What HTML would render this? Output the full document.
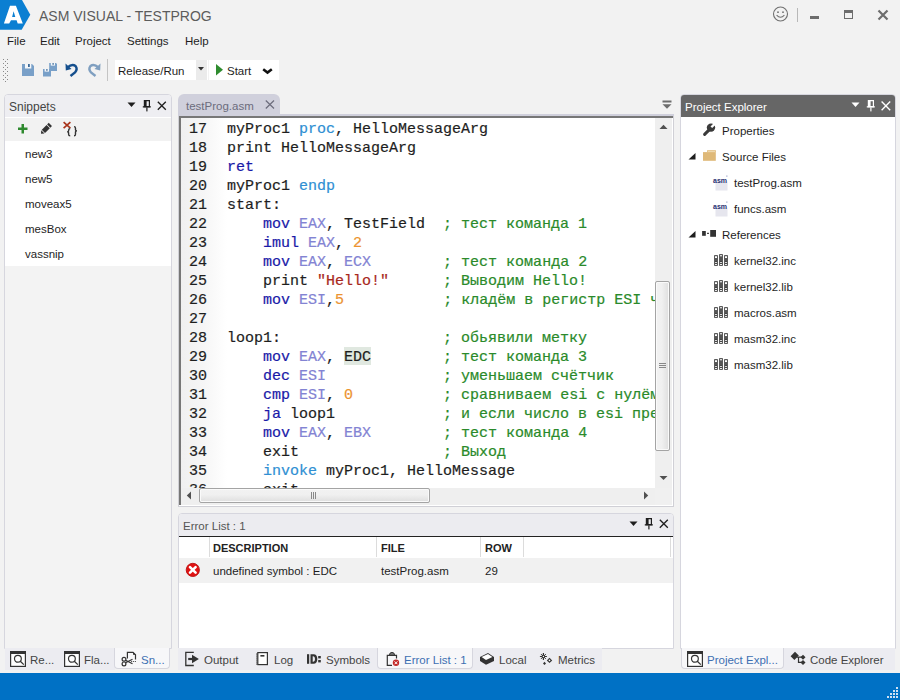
<!DOCTYPE html>
<html><head><meta charset="utf-8">
<style>
*{box-sizing:border-box;margin:0;padding:0}
html,body{width:900px;height:700px;overflow:hidden;background:#f2f2f2;font-family:"Liberation Sans",sans-serif;font-size:11.5px;line-height:14px;color:#1e1e1e;position:relative}
.a{position:absolute;white-space:nowrap}
svg.a{overflow:visible}
.code{font-family:"Liberation Mono",monospace;font-size:15px;line-height:19px;color:#1e1e1e;-webkit-text-stroke:0.2px currentColor}
.kw{color:#1a1aa8}
.kw2{color:#2f8fd3}
.reg{color:#8383d3}
.num{color:#ec9330}
.str{color:#a8281c}
.cm{color:#2a8a2a}
.ico{fill:#333}
</style></head><body>

<!-- ===== title bar ===== -->
<svg class="a" style="left:0;top:0" width="32" height="31" viewBox="0 0 32 31">
  <polygon points="0,0 22,0 30.3,14.8 21.7,29.8 0,29.8" fill="#0b7fd2"/>
  <path d="M3.9,23.5 L10,5.7 L15.9,5.7 L22.8,23.5 L17.7,23.5 L16.6,20.2 L11,20.2 L9.2,23.5 Z M12.1,17 L15.3,17 L13.6,11.2 Z" fill="#fff" fill-rule="evenodd"/>
</svg>
<div class="a" style="left:39px;top:8px;font-size:14px;line-height:16px;color:#5c5c5c">ASM VISUAL - TESTPROG</div>

<svg class="a" style="left:772px;top:6px" width="18" height="17" viewBox="0 0 18 17">
  <circle cx="8.5" cy="8" r="7" fill="none" stroke="#707070" stroke-width="1.1"/>
  <circle cx="6" cy="6.2" r="0.9" fill="#707070"/>
  <circle cx="11" cy="6.2" r="0.9" fill="#707070"/>
  <path d="M4.6,9.2 Q8.5,13.2 12.4,9.2" fill="none" stroke="#707070" stroke-width="1.1"/>
</svg>
<div class="a" style="left:797px;top:8px;width:1px;height:14px;background:#b8b8b8"></div>
<div class="a" style="left:810px;top:16px;width:9px;height:3px;background:#6d6d6d"></div>
<div class="a" style="left:844px;top:10px;width:9px;height:9px;border:1.2px solid #6d6d6d;border-top-width:3px"></div>
<svg class="a" style="left:877px;top:9px" width="12" height="12" viewBox="0 0 12 12">
  <path d="M1.5,1.5 L10.5,10.5 M10.5,1.5 L1.5,10.5" stroke="#6d6d6d" stroke-width="2.2"/>
</svg>

<!-- ===== menu ===== -->
<div class="a" style="left:7px;top:34px;font-size:11.5px">File</div>
<div class="a" style="left:40px;top:34px;font-size:11.5px">Edit</div>
<div class="a" style="left:75px;top:34px;font-size:11.5px">Project</div>
<div class="a" style="left:127px;top:34px;font-size:11.5px">Settings</div>
<div class="a" style="left:185px;top:34px;font-size:11.5px">Help</div>

<!-- ===== toolbar ===== -->
<svg class="a" style="left:0;top:0" width="10" height="85" viewBox="0 0 10 85"><g fill="#8a8a8a"><rect x="3" y="59" width="1" height="1"/><rect x="7" y="59" width="1" height="1"/><rect x="5" y="61" width="1" height="1"/><rect x="3" y="63" width="1" height="1"/><rect x="7" y="63" width="1" height="1"/><rect x="5" y="65" width="1" height="1"/><rect x="3" y="67" width="1" height="1"/><rect x="7" y="67" width="1" height="1"/><rect x="5" y="69" width="1" height="1"/><rect x="3" y="71" width="1" height="1"/><rect x="7" y="71" width="1" height="1"/><rect x="5" y="73" width="1" height="1"/><rect x="3" y="75" width="1" height="1"/><rect x="7" y="75" width="1" height="1"/><rect x="5" y="77" width="1" height="1"/><rect x="3" y="79" width="1" height="1"/><rect x="7" y="79" width="1" height="1"/><rect x="5" y="81" width="1" height="1"/></g></svg>
<!-- save -->
<svg class="a" style="left:22px;top:64px" width="13" height="13" viewBox="0 0 13 13">
  <path d="M0,0 H10 L12,2 V12 H0 Z" fill="#79a0c8"/>
  <rect x="3" y="0" width="6.3" height="4.5" fill="#f4f7fa"/>
  <rect x="6" y="0" width="1.8" height="3" fill="#3d6a98"/>
</svg>
<!-- save all -->
<svg class="a" style="left:42px;top:62px" width="16" height="15" viewBox="0 0 16 15">
  <path d="M7.2,1 H14 L15,2 V9 H7.2 Z" fill="#79a0c8"/>
  <rect x="8.8" y="1" width="4.2" height="2.6" fill="#f4f7fa"/><rect x="10.5" y="1" width="1.2" height="1.8" fill="#3d6a98"/>
  <path d="M1,7 H8 L9,8 V14.5 H1 Z" fill="#79a0c8"/>
  <rect x="2.6" y="7" width="4.4" height="2.6" fill="#f4f7fa"/><rect x="4.3" y="7" width="1.2" height="1.8" fill="#3d6a98"/>
</svg>
<!-- undo -->
<svg class="a" style="left:65px;top:62px" width="14" height="15" viewBox="0 0 14 15">
  <path d="M2.5,5.5 Q7,1.5 10.5,4 Q13,7 10,10.5 L5.5,14" fill="none" stroke="#154f8d" stroke-width="2.4"/>
  <path d="M0.5,1.5 L0.8,8.5 L6.5,7 Z" fill="#154f8d"/>
</svg>
<!-- redo -->
<svg class="a" style="left:87px;top:62px" width="14" height="15" viewBox="0 0 14 15">
  <path d="M11.5,5.5 Q7,1.5 3.5,4 Q1,7 4,10.5 L8.5,14" fill="none" stroke="#7f9fc0" stroke-width="2.4"/>
  <path d="M13.5,1.5 L13.2,8.5 L7.5,7 Z" fill="#7f9fc0"/>
</svg>
<div class="a" style="left:107px;top:59px;width:1px;height:22px;background:#c4c4c4"></div>

<div class="a" style="left:115px;top:60px;width:93px;height:20px;background:#fff"></div>
<div class="a" style="left:196px;top:60px;width:11px;height:20px;background:#ebebeb"></div>
<svg class="a" style="left:198px;top:67px" width="6" height="4" viewBox="0 0 6 4"><path d="M0,0 H6 L3,3.5 Z" fill="#333"/></svg>
<div class="a" style="left:118px;top:64px">Release/Run</div>
<div class="a" style="left:209px;top:60px;width:70px;height:20px;background:#fff"></div>
<svg class="a" style="left:216px;top:64px" width="8" height="12" viewBox="0 0 8 12"><path d="M0,0 L7,5.8 L0,11.6 Z" fill="#2f8c2f"/></svg>
<div class="a" style="left:227px;top:64px">Start</div>
<svg class="a" style="left:262px;top:68px" width="11" height="6" viewBox="0 0 11 6"><path d="M1.2,1.2 L5.5,4.6 L9.8,1.2" fill="none" stroke="#111" stroke-width="2.5"/></svg>

<!-- ===== snippets panel ===== -->
<div class="a" style="left:4px;top:94px;width:168px;height:555px;border:1px solid #d6d6de;border-radius:4px 4px 0 0;background:#fff;overflow:hidden">
  <div class="a" style="left:0;top:0;width:166px;height:22px;background:#eeeef2"></div>
  <div class="a" style="left:0;top:23px;width:166px;height:23px;background:#f2f2f2"></div>
  <div class="a" style="left:0;top:171px;width:166px;height:390px;background:#f3f3f3"></div>
</div>
<div class="a" style="left:9px;top:100px;color:#444;font-size:12px">Snippets</div>
<svg class="a" style="left:127px;top:101px" width="10" height="8" viewBox="0 0 10 8"><path d="M0.5,1.5 H8.5 L4.5,6 Z" fill="#1e1e1e"/></svg>
<svg class="a" style="left:142px;top:100px" width="10" height="12" viewBox="0 0 10 12"><path d="M2.4,0.6 H7.4 V6.6 H2.4 Z" fill="none" stroke="#1e1e1e" stroke-width="1.2"/><rect x="2" y="0.4" width="2.6" height="6.4" fill="#1e1e1e"/><rect x="0.8" y="6.2" width="8" height="1.3" fill="#1e1e1e"/><rect x="4.3" y="7.4" width="1.2" height="4" fill="#1e1e1e"/></svg>
<svg class="a" style="left:157px;top:101px" width="10" height="10" viewBox="0 0 10 10"><path d="M0.8,0.8 L8.8,8.8 M8.8,0.8 L0.8,8.8" stroke="#1e1e1e" stroke-width="1.3"/></svg>
<!-- toolbar icons -->
<svg class="a" style="left:18px;top:124px" width="10" height="10" viewBox="0 0 10 10"><path d="M3.5,0 H6 V3.5 H9.5 V6 H6 V9.5 H3.5 V6 H0 V3.5 H3.5 Z" fill="#2f8a2f"/></svg>
<svg class="a" style="left:36px;top:118px" width="22" height="22" viewBox="0 0 22 22"><g fill="#333"><polygon points="5.00,15.80 8.46,15.59 5.21,12.34"/><polygon points="9.03,15.02 13.84,10.21 10.59,6.96 5.78,11.77"/><polygon points="14.40,9.65 15.96,8.09 12.71,4.84 11.15,6.40"/></g></svg>
<svg class="a" style="left:62px;top:121px" width="17" height="16" viewBox="0 0 17 16">
  <path d="M1.6,1.2 L8.4,7.2 M8.4,1.2 L1.6,7.2" stroke="#a8341c" stroke-width="1.7"/>
  <path d="M8.2,7.6 Q6.6,7.6 6.6,9.2 V9.9 Q6.6,10.6 5.3,10.8 Q6.6,11 6.6,11.7 V13.2 Q6.6,14.8 8.2,14.8" fill="none" stroke="#333" stroke-width="1.4"/>
  <path d="M12,5.6 Q13.5,5.6 13.5,7.2 V9.1 Q13.5,9.7 14.9,9.9 Q13.5,10.1 13.5,10.7 V13.2 Q13.5,14.8 12,14.8" fill="none" stroke="#333" stroke-width="1.4"/>
</svg>
<div class="a" style="left:25px;top:147px">new3</div>
<div class="a" style="left:25px;top:172px">new5</div>
<div class="a" style="left:25px;top:197px">moveax5</div>
<div class="a" style="left:25px;top:222px">mesBox</div>
<div class="a" style="left:25px;top:247px">vassnip</div>

<!-- ===== editor ===== -->
<div class="a" style="left:178px;top:114px;width:496px;height:2px;background:#d0d0dc"></div>
<div class="a" style="left:178px;top:94px;width:102px;height:22px;background:#d0d0dc;border-radius:6px 6px 0 0"></div>
<div class="a" style="left:186px;top:99px;color:#6c6c7c;font-size:11.5px">testProg.asm</div>
<svg class="a" style="left:265px;top:100px" width="10" height="9" viewBox="0 0 10 9"><path d="M0.8,0.5 L9,8.5 M9,0.5 L0.8,8.5" stroke="#6c6c7c" stroke-width="1.2"/></svg>
<svg class="a" style="left:662px;top:100px" width="10" height="10" viewBox="0 0 10 10"><rect x="0.5" y="0.5" width="9" height="2" fill="#6d6d6d"/><path d="M0.5,4.2 H9.5 L5,8.8 Z" fill="#6d6d6d"/></svg>

<div class="a" style="left:178px;top:116px;width:496px;height:391px;border:1px solid #d0d0d6;background:#fff"></div>
<div class="a" style="left:179px;top:116px;width:494px;height:2px;background:#777"></div>
<div class="a" style="left:179px;top:116px;width:2px;height:389px;background:#777"></div>
<div class="a" style="left:181px;top:118px;width:46px;height:370px;background:linear-gradient(90deg,#f0f0f0,#f6f6f6 50%,#fff)"></div>

<div class="a code" style="left:181px;top:118px;width:474px;height:370px;overflow:hidden">
<div class="a" style="left:0;top:2px;width:474px;height:380px">
<div class="a" style="left:8px;top:0;color:#1e1e1e">17<br>18<br>19<br>20<br>21<br>22<br>23<br>24<br>25<br>26<br>27<br>28<br>29<br>30<br>31<br>32<br>33<br>34<br>35<br>36</div>
<div class="a" style="left:163px;top:227px;width:27px;height:18px;background:#e0e8e0"></div>
<pre class="a code" style="left:46px;top:0;white-space:pre">myProc1 <span class="kw2">proc</span>, HelloMessageArg
print HelloMessageArg
<span class="kw">ret</span>
myProc1 <span class="kw2">endp</span>
start:
    <span class="kw">mov</span> <span class="reg">EAX</span>, TestField  <span class="cm">; тест команда 1</span>
    <span class="kw">imul</span> <span class="reg">EAX</span>, <span class="num">2</span>
    <span class="kw">mov</span> <span class="reg">EAX</span>, <span class="reg">ECX</span>        <span class="cm">; тест команда 2</span>
    print <span class="str">"Hello!"</span>      <span class="cm">; Выводим Hello!</span>
    <span class="kw">mov</span> <span class="reg">ESI</span>,<span class="num">5</span>           <span class="cm">; кладём в регистр ESI число</span>

loop1:                  <span class="cm">; обьявили метку</span>
    <span class="kw">mov</span> <span class="reg">EAX</span>, EDC        <span class="cm">; тест команда 3</span>
    <span class="kw">dec</span> <span class="reg">ESI</span>             <span class="cm">; уменьшаем счётчик</span>
    <span class="kw">cmp</span> <span class="reg">ESI</span>, <span class="num">0</span>          <span class="cm">; сравниваем esi с нулём</span>
    <span class="kw">ja</span> loop1            <span class="cm">; и если число в esi превышает</span>
    <span class="kw">mov</span> <span class="reg">EAX</span>, <span class="reg">EBX</span>        <span class="cm">; тест команда 4</span>
    exit                <span class="cm">; Выход</span>
    <span class="kw2">invoke</span> myProc1, HelloMessage
    exit
</pre>
</div>
</div>

<!-- vertical scrollbar -->
<div class="a" style="left:655px;top:118px;width:17px;height:370px;background:#efefef"></div>
<svg class="a" style="left:659px;top:124px" width="9" height="6" viewBox="0 0 9 6"><path d="M0.5,5 L4.5,0.8 L8.5,5 Z" fill="#505050"/></svg>
<div class="a" style="left:655px;top:281px;width:15px;height:170px;border:1px solid #a4a4a4;border-radius:2px;box-shadow:inset 0 0 0 1px #fafafa;background:linear-gradient(90deg,#f2f2f2,#f0f0f0 45%,#dedede)"></div>
<div class="a" style="left:659px;top:363px;width:7px;height:1px;background:#888"></div>
<div class="a" style="left:659px;top:365px;width:7px;height:1px;background:#888"></div>
<div class="a" style="left:659px;top:367px;width:7px;height:1px;background:#888"></div>
<svg class="a" style="left:659px;top:475px" width="9" height="6" viewBox="0 0 9 6"><path d="M0.5,1 L4.5,5 L8.5,1 Z" fill="#505050"/></svg>
<!-- horizontal scrollbar -->
<div class="a" style="left:181px;top:488px;width:491px;height:17px;background:#efefef"></div>
<svg class="a" style="left:186px;top:491px" width="6" height="9" viewBox="0 0 6 9"><path d="M5,0.5 L0.8,4.5 L5,8.5 Z" fill="#505050"/></svg>
<div class="a" style="left:199px;top:488px;width:231px;height:15px;border:1px solid #a4a4a4;border-radius:2px;box-shadow:inset 0 0 0 1px #fafafa;background:linear-gradient(180deg,#f2f2f2,#f0f0f0 45%,#dedede)"></div>
<div class="a" style="left:311px;top:492px;width:1px;height:7px;background:#888"></div>
<div class="a" style="left:313px;top:492px;width:1px;height:7px;background:#888"></div>
<div class="a" style="left:315px;top:492px;width:1px;height:7px;background:#888"></div>
<svg class="a" style="left:643px;top:491px" width="6" height="9" viewBox="0 0 6 9"><path d="M1,0.5 L5.2,4.5 L1,8.5 Z" fill="#505050"/></svg>
<div class="a" style="left:655px;top:488px;width:17px;height:17px;background:#f0f0f0"></div>

<!-- ===== error list ===== -->
<div class="a" style="left:178px;top:513px;width:496px;height:136px;border:1px solid #d6d6de;border-radius:4px 4px 0 0;background:#fff;overflow:hidden">
  <div class="a" style="left:0;top:0;width:494px;height:22px;background:#ececf0"></div>
  <div class="a" style="left:0;top:22px;width:494px;height:1px;background:#222"></div>
  <div class="a" style="left:0;top:44px;width:494px;height:25px;background:#f1f1f1"></div>
  <div class="a" style="left:30px;top:23px;width:1px;height:20px;background:#dcdcdc"></div>
  <div class="a" style="left:197px;top:23px;width:1px;height:20px;background:#dcdcdc"></div>
  <div class="a" style="left:301px;top:23px;width:1px;height:20px;background:#dcdcdc"></div>
  <div class="a" style="left:344px;top:23px;width:1px;height:20px;background:#dcdcdc"></div>
  <div class="a" style="left:491px;top:23px;width:1px;height:20px;background:#dcdcdc"></div>
</div>
<div class="a" style="left:183px;top:519px;color:#555">Error List : 1</div>
<svg class="a" style="left:629px;top:520px" width="10" height="8" viewBox="0 0 10 8"><path d="M0.5,1.5 H8.5 L4.5,6 Z" fill="#1e1e1e"/></svg>
<svg class="a" style="left:644px;top:518px" width="10" height="12" viewBox="0 0 10 12"><path d="M2.4,0.6 H7.4 V6.6 H2.4 Z" fill="none" stroke="#1e1e1e" stroke-width="1.2"/><rect x="2" y="0.4" width="2.6" height="6.4" fill="#1e1e1e"/><rect x="0.8" y="6.2" width="8" height="1.3" fill="#1e1e1e"/><rect x="4.3" y="7.4" width="1.2" height="4" fill="#1e1e1e"/></svg>
<svg class="a" style="left:659px;top:519px" width="10" height="10" viewBox="0 0 10 10"><path d="M0.8,0.8 L8.8,8.8 M8.8,0.8 L0.8,8.8" stroke="#1e1e1e" stroke-width="1.3"/></svg>
<div class="a" style="left:213px;top:541px;font-weight:bold;font-size:11px;color:#222">DESCRIPTION</div>
<div class="a" style="left:381px;top:541px;font-weight:bold;font-size:11px;color:#222">FILE</div>
<div class="a" style="left:485px;top:541px;font-weight:bold;font-size:11px;color:#222">ROW</div>
<svg class="a" style="left:185px;top:563px" width="16" height="16" viewBox="0 0 16 16">
  <circle cx="7.8" cy="6.9" r="6.6" fill="#e01212" stroke="#b81010" stroke-width="0.9"/>
  <path d="M5,4.1 L10.6,9.7 M10.6,4.1 L5,9.7" stroke="#fff" stroke-width="2.6" stroke-linecap="round"/>
</svg>
<div class="a" style="left:213px;top:564px">undefined symbol : EDC</div>
<div class="a" style="left:381px;top:564px">testProg.asm</div>
<div class="a" style="left:485px;top:564px">29</div>

<!-- ===== project explorer ===== -->
<div class="a" style="left:680px;top:94px;width:216px;height:555px;border:1px solid #d6d6de;border-radius:4px 4px 0 0;background:#fff;overflow:hidden">
  <div class="a" style="left:0;top:0;width:214px;height:22px;background:#666"></div>
</div>
<div class="a" style="left:685px;top:100px;color:#fff;font-size:11.5px">Project Explorer</div>
<svg class="a" style="left:851px;top:101px" width="10" height="8" viewBox="0 0 10 8"><path d="M0.5,1.5 H8.5 L4.5,6 Z" fill="#fff"/></svg>
<svg class="a" style="left:866px;top:100px" width="10" height="12" viewBox="0 0 10 12"><path d="M2.4,0.6 H7.4 V6.6 H2.4 Z" fill="none" stroke="#fff" stroke-width="1.2"/><rect x="2" y="0.4" width="2.6" height="6.4" fill="#fff"/><rect x="0.8" y="6.2" width="8" height="1.3" fill="#fff"/><rect x="4.3" y="7.4" width="1.2" height="4" fill="#fff"/></svg>
<svg class="a" style="left:881px;top:101px" width="10" height="10" viewBox="0 0 10 10"><path d="M0.6,0.6 L9.2,9.2 M9.2,0.6 L0.6,9.2" stroke="#fff" stroke-width="1.4"/></svg>

<!-- tree -->
<svg class="a" style="left:700px;top:120px" width="20" height="20" viewBox="0 0 20 20"><path d="M4.6,14.4 L9.6,9.4" stroke="#3a3a3a" stroke-width="3" stroke-linecap="round"/><circle cx="11" cy="7.6" r="4.2" fill="#3a3a3a"/><polygon points="12.2,8.1 16.1,4.2 14.4,2.5 10.5,6.4" fill="#fff"/></svg>
<div class="a" style="left:722px;top:124px">Properties</div>

<svg class="a" style="left:688px;top:153px" width="8" height="7" viewBox="0 0 8 7"><path d="M7.5,0 V6.5 H0.5 Z" fill="#1e1e1e"/></svg>
<svg class="a" style="left:700px;top:148px" width="20" height="14" viewBox="0 0 20 14"><rect x="7.2" y="2.2" width="8.6" height="2" fill="#dcb673"/><rect x="8" y="2.8" width="7" height="1" fill="#f3e2bd"/><rect x="3" y="4.1" width="12.8" height="8.7" fill="#dfb978"/></svg>
<div class="a" style="left:722px;top:150px">Source Files</div>

<svg class="a" style="left:713px;top:175px" width="16" height="16" viewBox="0 0 16 16"><rect x="2.5" y="6.5" width="12" height="9" fill="#e6e6ee"/><text x="0" y="8" font-family="Liberation Sans" font-size="6.6" font-weight="bold" fill="#1f2f72" textLength="14" lengthAdjust="spacingAndGlyphs">asm</text><rect x="13.5" y="0.5" width="0.8" height="1.2" fill="#6a7ab0"/></svg>
<div class="a" style="left:734px;top:176px">testProg.asm</div>
<svg class="a" style="left:713px;top:201px" width="16" height="16" viewBox="0 0 16 16"><rect x="2.5" y="6.5" width="12" height="9" fill="#e6e6ee"/><text x="0" y="8" font-family="Liberation Sans" font-size="6.6" font-weight="bold" fill="#1f2f72" textLength="14" lengthAdjust="spacingAndGlyphs">asm</text><rect x="13.5" y="0.5" width="0.8" height="1.2" fill="#6a7ab0"/></svg>
<div class="a" style="left:734px;top:202px">funcs.asm</div>

<svg class="a" style="left:688px;top:231px" width="8" height="7" viewBox="0 0 8 7"><path d="M7.5,0 V6.5 H0.5 Z" fill="#1e1e1e"/></svg>
<svg class="a" style="left:700px;top:228px" width="18" height="10" viewBox="0 0 18 10"><rect x="2.1" y="3" width="3.7" height="4.8" fill="#333"/><rect x="7" y="4.8" width="2" height="1.1" fill="#333"/><rect x="10.2" y="2" width="5.8" height="6.8" fill="#333"/></svg>
<div class="a" style="left:722px;top:228px">References</div>

<svg class="a" style="left:713px;top:253px" width="16" height="14" viewBox="0 0 16 14"><g fill="#333"><rect x="1.2" y="2.2" width="3.6" height="10.6"/><rect x="6.2" y="1.2" width="3.6" height="11.6"/><rect x="11.2" y="2.2" width="3.6" height="10.6"/></g><g fill="#555"><rect x="2" y="6" width="2" height="2.5"/><rect x="7" y="4" width="2" height="4.5"/><rect x="12" y="6" width="2" height="2.5"/></g><g fill="#fff"><rect x="2" y="3.2" width="2" height="2"/><rect x="7" y="2.2" width="2" height="1.2"/><rect x="12" y="3.2" width="2" height="2"/><rect x="2" y="9.2" width="2" height="0.9"/><rect x="7" y="9.2" width="2" height="0.9"/><rect x="12" y="9.2" width="2" height="0.9"/><rect x="2" y="11.1" width="2" height="0.9"/><rect x="7" y="11.1" width="2" height="0.9"/><rect x="12" y="11.1" width="2" height="0.9"/></g></svg>
<div class="a" style="left:734px;top:254px">kernel32.inc</div>
<svg class="a" style="left:713px;top:279px" width="16" height="14" viewBox="0 0 16 14"><g fill="#333"><rect x="1.2" y="2.2" width="3.6" height="10.6"/><rect x="6.2" y="1.2" width="3.6" height="11.6"/><rect x="11.2" y="2.2" width="3.6" height="10.6"/></g><g fill="#555"><rect x="2" y="6" width="2" height="2.5"/><rect x="7" y="4" width="2" height="4.5"/><rect x="12" y="6" width="2" height="2.5"/></g><g fill="#fff"><rect x="2" y="3.2" width="2" height="2"/><rect x="7" y="2.2" width="2" height="1.2"/><rect x="12" y="3.2" width="2" height="2"/><rect x="2" y="9.2" width="2" height="0.9"/><rect x="7" y="9.2" width="2" height="0.9"/><rect x="12" y="9.2" width="2" height="0.9"/><rect x="2" y="11.1" width="2" height="0.9"/><rect x="7" y="11.1" width="2" height="0.9"/><rect x="12" y="11.1" width="2" height="0.9"/></g></svg>
<div class="a" style="left:734px;top:280px">kernel32.lib</div>
<svg class="a" style="left:713px;top:305px" width="16" height="14" viewBox="0 0 16 14"><g fill="#333"><rect x="1.2" y="2.2" width="3.6" height="10.6"/><rect x="6.2" y="1.2" width="3.6" height="11.6"/><rect x="11.2" y="2.2" width="3.6" height="10.6"/></g><g fill="#555"><rect x="2" y="6" width="2" height="2.5"/><rect x="7" y="4" width="2" height="4.5"/><rect x="12" y="6" width="2" height="2.5"/></g><g fill="#fff"><rect x="2" y="3.2" width="2" height="2"/><rect x="7" y="2.2" width="2" height="1.2"/><rect x="12" y="3.2" width="2" height="2"/><rect x="2" y="9.2" width="2" height="0.9"/><rect x="7" y="9.2" width="2" height="0.9"/><rect x="12" y="9.2" width="2" height="0.9"/><rect x="2" y="11.1" width="2" height="0.9"/><rect x="7" y="11.1" width="2" height="0.9"/><rect x="12" y="11.1" width="2" height="0.9"/></g></svg>
<div class="a" style="left:734px;top:306px">macros.asm</div>
<svg class="a" style="left:713px;top:331px" width="16" height="14" viewBox="0 0 16 14"><g fill="#333"><rect x="1.2" y="2.2" width="3.6" height="10.6"/><rect x="6.2" y="1.2" width="3.6" height="11.6"/><rect x="11.2" y="2.2" width="3.6" height="10.6"/></g><g fill="#555"><rect x="2" y="6" width="2" height="2.5"/><rect x="7" y="4" width="2" height="4.5"/><rect x="12" y="6" width="2" height="2.5"/></g><g fill="#fff"><rect x="2" y="3.2" width="2" height="2"/><rect x="7" y="2.2" width="2" height="1.2"/><rect x="12" y="3.2" width="2" height="2"/><rect x="2" y="9.2" width="2" height="0.9"/><rect x="7" y="9.2" width="2" height="0.9"/><rect x="12" y="9.2" width="2" height="0.9"/><rect x="2" y="11.1" width="2" height="0.9"/><rect x="7" y="11.1" width="2" height="0.9"/><rect x="12" y="11.1" width="2" height="0.9"/></g></svg>
<div class="a" style="left:734px;top:332px">masm32.inc</div>
<svg class="a" style="left:713px;top:357px" width="16" height="14" viewBox="0 0 16 14"><g fill="#333"><rect x="1.2" y="2.2" width="3.6" height="10.6"/><rect x="6.2" y="1.2" width="3.6" height="11.6"/><rect x="11.2" y="2.2" width="3.6" height="10.6"/></g><g fill="#555"><rect x="2" y="6" width="2" height="2.5"/><rect x="7" y="4" width="2" height="4.5"/><rect x="12" y="6" width="2" height="2.5"/></g><g fill="#fff"><rect x="2" y="3.2" width="2" height="2"/><rect x="7" y="2.2" width="2" height="1.2"/><rect x="12" y="3.2" width="2" height="2"/><rect x="2" y="9.2" width="2" height="0.9"/><rect x="7" y="9.2" width="2" height="0.9"/><rect x="12" y="9.2" width="2" height="0.9"/><rect x="2" y="11.1" width="2" height="0.9"/><rect x="7" y="11.1" width="2" height="0.9"/><rect x="12" y="11.1" width="2" height="0.9"/></g></svg>
<div class="a" style="left:734px;top:358px">masm32.lib</div>

<!-- ===== bottom tabs ===== -->
<div class="a" style="left:5px;top:648px;width:110px;height:22px;background:#ececf1"></div>
<div class="a" style="left:114px;top:648px;width:56px;height:21px;background:#f7f7f9;border:1px solid #d6d6de;border-top:none;border-radius:0 0 4px 4px"></div>
<svg class="a" style="left:10px;top:651px" width="17" height="17" viewBox="0 0 17 17"><rect x="0.6" y="0.6" width="14.8" height="14.8" fill="#fff" stroke="#333" stroke-width="1.2"/><rect x="0" y="0" width="16" height="3" fill="#333"/><circle cx="7.9" cy="7.8" r="3.4" fill="none" stroke="#333" stroke-width="1.2"/><path d="M10.3,10.3 L13.8,13.6" stroke="#333" stroke-width="1.3"/></svg>
<div class="a" style="left:30px;top:653px;color:#444">Re...</div>
<svg class="a" style="left:64px;top:651px" width="17" height="17" viewBox="0 0 17 17"><rect x="0.6" y="0.6" width="14.8" height="14.8" fill="#fff" stroke="#333" stroke-width="1.2"/><rect x="0" y="0" width="16" height="3" fill="#333"/><circle cx="7.9" cy="7.8" r="3.4" fill="none" stroke="#333" stroke-width="1.2"/><path d="M10.3,10.3 L13.8,13.6" stroke="#333" stroke-width="1.3"/></svg>
<div class="a" style="left:84px;top:653px;color:#444">Fla...</div>
<svg class="a" style="left:118px;top:648px" width="22" height="22" viewBox="0 0 22 22"><path d="M9.4,10.5 V4.3 H15 L17.5,6.8 V11.5" fill="none" stroke="#333" stroke-width="1.2"/><path d="M15,4.3 L17.5,6.8 H15 Z" fill="#333"/><circle cx="6" cy="11.2" r="1.9" fill="none" stroke="#333" stroke-width="1.2"/><circle cx="6" cy="15.9" r="1.9" fill="none" stroke="#333" stroke-width="1.2"/><path d="M7.6,12.3 L14.5,15.8 M7.6,14.8 L14.5,11.2" stroke="#333" stroke-width="1.2"/><path d="M13.2,13.5 H18" stroke="#333" stroke-width="1.2" stroke-dasharray="1 1"/></svg>
<div class="a" style="left:141px;top:653px;color:#3d6fb2">Sn...</div>

<div class="a" style="left:178px;top:648px;width:424px;height:22px;background:#ececf1"></div>
<div class="a" style="left:377px;top:648px;width:96px;height:21px;background:#f7f7f9;border:1px solid #d6d6de;border-top:none;border-radius:0 0 4px 4px"></div>
<svg class="a" style="left:180px;top:648px" width="22" height="22" viewBox="0 0 22 22"><path d="M13.8,4.3 H5.8 V17.5 H13.8" fill="none" stroke="#333" stroke-width="1.3"/><path d="M8.2,11 H13" stroke="#333" stroke-width="2.2"/><path d="M12,6.8 L18.9,11 L12,15.2 Z" fill="#333"/></svg>
<div class="a" style="left:204px;top:653px;color:#444">Output</div>
<svg class="a" style="left:250px;top:648px" width="22" height="22" viewBox="0 0 22 22"><rect x="7.8" y="4.6" width="9.6" height="12" fill="#fff" stroke="#333" stroke-width="1.2"/><g fill="#333"><rect x="6" y="5.6" width="1.6" height="0.9"/><rect x="6" y="7.6" width="1.6" height="0.9"/><rect x="6" y="9.6" width="1.6" height="0.9"/><rect x="6" y="11.6" width="1.6" height="0.9"/><rect x="6" y="13.6" width="1.6" height="0.9"/><rect x="6" y="15.6" width="1.6" height="0.9"/></g><rect x="10.4" y="7" width="4" height="1.6" fill="#333"/></svg>
<div class="a" style="left:274px;top:653px;color:#444">Log</div>
<svg class="a" style="left:304px;top:648px" width="22" height="22" viewBox="0 0 22 22"><rect x="3" y="6.2" width="2.2" height="9.6" fill="#333"/><path d="M6.5,6.2 H9.5 Q13.3,6.2 13.3,11 Q13.3,15.8 9.5,15.8 H6.5 Z M8.7,8.2 V13.8 H9.3 Q11,13.8 11,11 Q11,8.2 9.3,8.2 Z" fill="#333" fill-rule="evenodd"/><rect x="14.2" y="8" width="2.6" height="2.4" fill="#333"/><rect x="14.2" y="12" width="2.6" height="2.4" fill="#333"/></svg>
<div class="a" style="left:326px;top:653px;color:#444">Symbols</div>
<svg class="a" style="left:380px;top:648px" width="22" height="22" viewBox="0 0 22 22"><path d="M16.5,10.5 V7.3 H7.3 V17.4 H12" fill="none" stroke="#333" stroke-width="1.2"/><path d="M9.4,7.3 Q9.4,4.4 12,4.4 Q14.6,4.4 14.6,7.3 Z" fill="#777" stroke="#333" stroke-width="1"/><circle cx="16" cy="14.8" r="3.2" fill="#c42a2a"/><path d="M14.6,13.4 L17.4,16.2 M17.4,13.4 L14.6,16.2" stroke="#fff" stroke-width="1"/></svg>
<div class="a" style="left:404px;top:653px;color:#3d6fb2">Error List : 1</div>
<svg class="a" style="left:476px;top:648px" width="22" height="22" viewBox="0 0 22 22"><path d="M4,9 L12,5 L18,9 V13 L10,16.7 L4,13 Z" fill="#333"/><path d="M5.6,9 L12,6 L16.4,9 L10,12 Z" fill="#fff"/></svg>
<div class="a" style="left:499px;top:653px;color:#444">Local</div>
<svg class="a" style="left:536px;top:648px" width="22" height="22" viewBox="0 0 22 22"><g stroke="#333" stroke-width="1.2"><path d="M7.4,5 V12 M3.9,8.5 H10.9"/><path d="M5,6.1 L9.8,10.9 M9.8,6.1 L5,10.9" stroke-width="1"/></g><circle cx="7.4" cy="8.5" r="1.8" fill="#333"/><circle cx="7.4" cy="8.5" r="0.7" fill="#fff"/><path d="M13.5,9.7 L16.2,12.4 L13.5,15.1 L10.8,12.4 Z" fill="#333"/><circle cx="13.5" cy="12.4" r="0.8" fill="#fff"/><path d="M8.5,13.8 L10,15.4 L8.5,17 L7,15.4 Z" fill="#333"/></svg>
<div class="a" style="left:558px;top:653px;color:#444">Metrics</div>

<div class="a" style="left:783px;top:648px;width:112px;height:22px;background:#ececf1"></div>
<div class="a" style="left:681px;top:648px;width:103px;height:21px;background:#f7f7f9;border:1px solid #d6d6de;border-top:none;border-radius:0 0 4px 4px"></div>
<svg class="a" style="left:687px;top:651px" width="17" height="17" viewBox="0 0 17 17"><rect x="0.6" y="0.6" width="14.8" height="14.8" fill="#fff" stroke="#333" stroke-width="1.2"/><rect x="0" y="0" width="16" height="3" fill="#333"/><circle cx="7.9" cy="7.8" r="3.4" fill="none" stroke="#333" stroke-width="1.2"/><path d="M10.3,10.3 L13.8,13.6" stroke="#333" stroke-width="1.3"/></svg>
<div class="a" style="left:707px;top:653px;color:#3d6fb2">Project Expl...</div>
<svg class="a" style="left:788px;top:648px" width="22" height="22" viewBox="0 0 22 22"><path d="M2.6,8.3 L7,3.8 L10.8,7.6 L6.4,12.1 Z" fill="#333"/><path d="M8.5,9.2 H15 M10.5,9.2 V14.4 H15" fill="none" stroke="#333" stroke-width="1.2"/><path d="M15,6.8 L17.5,9.3 L15,11.8 L12.5,9.3 Z" fill="#333"/><path d="M15,12 L17.5,14.5 L15,17 L12.5,14.5 Z" fill="#333"/></svg>
<div class="a" style="left:810px;top:653px;color:#444">Code Explorer</div>

<!-- ===== status bar ===== -->
<div class="a" style="left:0;top:673px;width:900px;height:27px;background:#0071c5"></div>
<svg class="a" style="left:886px;top:687px" width="14" height="13" viewBox="0 0 14 13"><g fill="#cfe0f2">
<rect x="10" y="0" width="2" height="2"/>
<rect x="7" y="3" width="2" height="2"/><rect x="10" y="3" width="2" height="2"/>
<rect x="4" y="6" width="2" height="2"/><rect x="7" y="6" width="2" height="2"/><rect x="10" y="6" width="2" height="2"/>
<rect x="1" y="9" width="2" height="2"/><rect x="4" y="9" width="2" height="2"/><rect x="7" y="9" width="2" height="2"/><rect x="10" y="9" width="2" height="2"/>
</g></svg>

</body></html>
